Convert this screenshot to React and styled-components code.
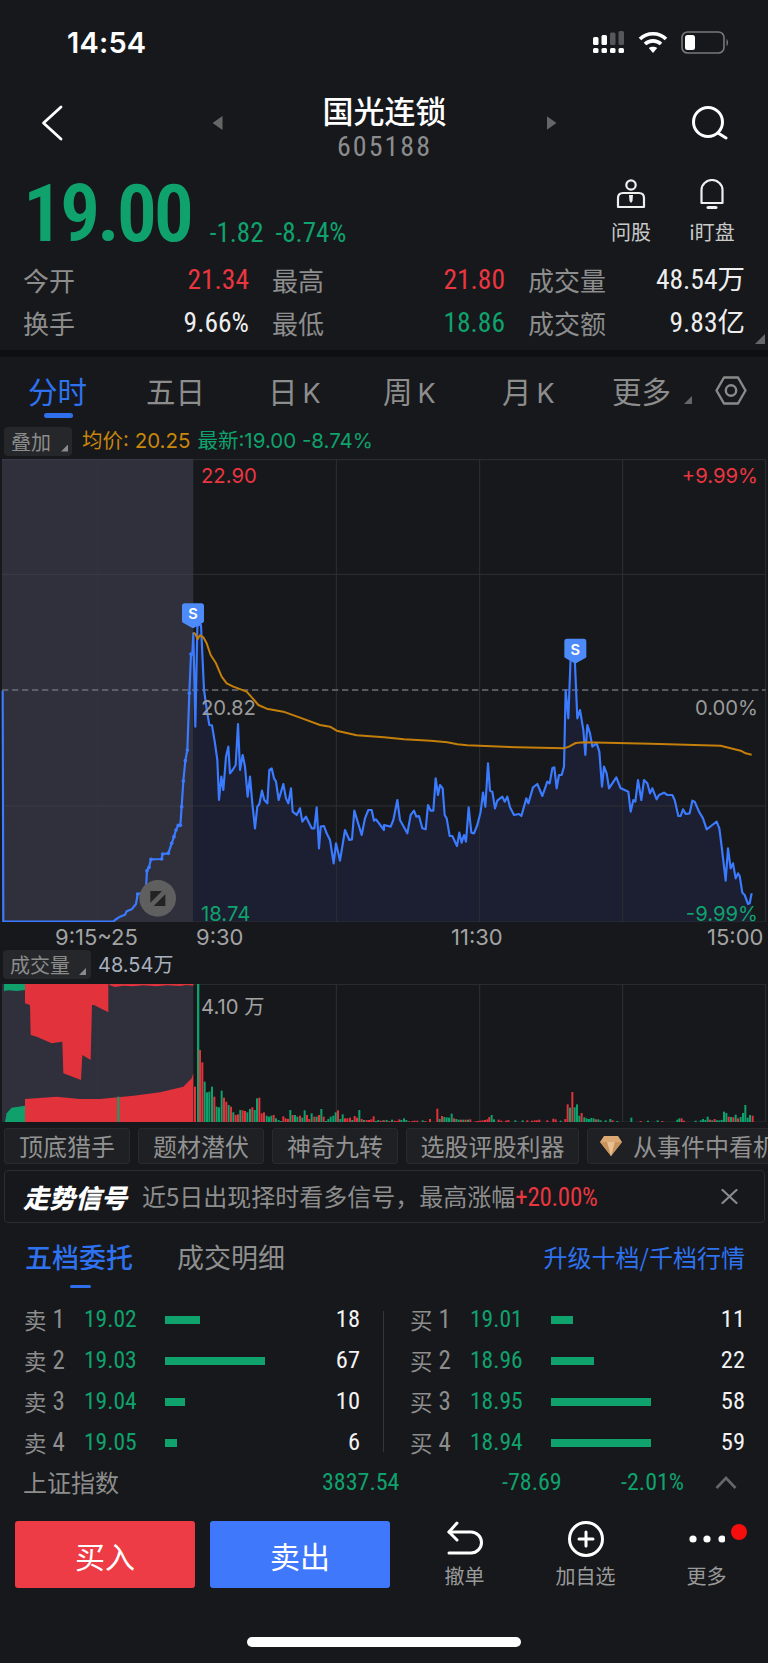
import React from 'react';
import styled, { createGlobalStyle, css } from 'styled-components';

const CJK = '"Noto Sans CJK SC", "Noto Sans", sans-serif';
const LAT = 'Inter, "Noto Sans CJK SC", sans-serif';
const GREEN = '#10a26d';
const RED = '#ea3640';
const GRAY = '#8d8d8d';
const num = (size, line = 1, weight = 400) => css`
  font-family: Roboto, "Noto Sans CJK SC", sans-serif;
  font-size: ${size}px; line-height: ${line === 1 ? 1 : `${line}px`}; font-weight: ${weight}; font-stretch: 75%;
`;

const Global = createGlobalStyle`
  html, body { margin: 0; padding: 0; background: #16181b; }
  body { overflow: hidden; }
  * { box-sizing: border-box; }
`;

const Page = styled.div`
  width: 768px; height: 1663px; background: #16181b; font-family: ${CJK}; color: ${GRAY}; overflow: hidden;
`;
const StatusBar = styled.div`
  height: 84px; display: flex; align-items: center; justify-content: space-between; padding: 0 39px 0 67px;
`;
const Clock = styled.div`font: 600 29px/1 Inter, sans-serif; color: #fff; letter-spacing: .2px;`;
const StatusIcons = styled.div`display: flex; align-items: center; gap: 13px;`;

const Nav = styled.div`
  height: 86px; display: flex; align-items: center; justify-content: space-between; padding: 0 40px 0 41px;
`;
const IconSlot = styled.div`width: 37px; height: 40px; display: flex; align-items: center; margin-top: -8px;`;
const NavCenter = styled.div`
  width: 344px; display: flex; align-items: center; justify-content: space-between; margin-top: -8px;
`;
const Arrow = styled.div`
  width: 10px; height: 14px; background: #666;
  clip-path: ${p => p.$dir === 'left' ? 'polygon(100% 0, 100% 100%, 0 50%)' : 'polygon(0 0, 100% 50%, 0 100%)'};
`;
const TitleBox = styled.div`display: flex; flex-direction: column; align-items: center; margin-top: 4px;`;
const Title = styled.div`font-size: 31px; line-height: 38px; color: #fff; font-weight: 500;`;
const Code = styled.div`${num(28, 26)} color: #8c8c8c; letter-spacing: 2px; margin-top: 5px;`;

const PriceRow = styled.div`
  height: 90px; display: flex; align-items: flex-start; padding: 0 30px 0 23px;
`;
const BigPrice = styled.div`${num(80, 72, 600)} letter-spacing: -3.2px; color: ${GREEN}; margin-top: 8px;`;
const Changes = styled.div`${num(27, 30)} display: flex; gap: 12px; margin: 48px 0 0 19px; color: ${GREEN};`;
const Tools = styled.div`margin-left: auto; display: flex; gap: 29px; padding-top: 9px;`;
const Tool = styled.div`display: flex; flex-direction: column; align-items: center; color: #c9c9c9; font-size: 20px; line-height: 28px; width: 52px; gap: 9px;`;

const Stats = styled.div`
  height: 90px; display: grid; grid-template-columns: 226px 233px 217px; column-gap: 23px; grid-auto-rows: 43px; padding: 0 0 0 23px; position: relative; margin-top: -2px; margin-bottom: 2px;
`;
const Stat = styled.div`display: flex; align-items: center; justify-content: space-between; font-size: 26px;`;
const StatValue = styled.span`${num(27.5)} color: ${p => p.$c || '#eee'};`;
const CornerCaret = styled.div`
  position: absolute; width: ${p => p.$s || 10}px; height: ${p => p.$s || 10}px; right: ${p => p.$r}px; bottom: ${p => p.$b}px;
  background: ${p => p.$c || '#666'}; clip-path: polygon(100% 0, 100% 100%, 0 100%);
`;
const Band = styled.div`height: 7px; background: #0e0f11;`;

const Tabs = styled.div`
  height: 66px; display: grid; grid-template-columns: 118px 122px 115px 119px 110px 103px auto; align-items: start; padding: 17px 0 0 28px; position: relative;
`;
const Tab = styled.div`
  font-size: 29.5px; line-height: 32px; color: ${p => p.$active ? '#2f72f0' : '#8d8d8d'}; position: relative; white-space: nowrap; display: flex; align-items: baseline; gap: ${p => p.$gap || 0}px;
`;
const TabLine = styled.div`position: absolute; left: 16px; top: 39px; width: 29px; height: 5px; border-radius: 3px; background: #2f6fec;`;
const Latin = styled.span`font-family: ${LAT}; font-size: 27px;`;
const HexSlot = styled.div`margin-top: 2px;`;

const OverlayRow = styled.div`height: 36px; display: flex; align-items: center; padding-left: 4px; gap: 10px;`;
const Drop = styled.div`
  position: relative; width: ${p => p.$w}px; height: 29px; background: #25272a; border-radius: 4px; color: #8c8c8c; font-size: 20px; line-height: 29px; padding-left: ${p => p.$pl || 7}px;
`;
const Legend = styled.div`display: flex; gap: 7px; font: 20.5px/1 ${LAT};`;
const LegendItem = styled.span`color: ${p => p.$c};`;

const ChartBox = styled.div`position: relative; height: 463px;`;
const Drawing = styled.svg`display: block;`;
const ChartLabel = styled.div`
  position: absolute; font: 20.3px/1 ${LAT}; color: ${p => p.$c}; top: ${p => p.$t}px;
  ${p => p.$l !== undefined ? `left:${p.$l}px;` : `right:${p.$r}px;`}
`;
const Axis = styled.div`
  height: 28px; display: grid; grid-template-columns: 141px 255px 256px auto; padding: 4px 0 0 55px; font: 22px/22px ${LAT}; color: #a3a3a3; white-space: nowrap;
`;
const VolHead = styled.div`height: 34px; display: flex; padding: 0 0 0 3px; gap: 7px; align-items: flex-start;`;
const VolValue = styled.div`font: 20px/30px ${LAT}; color: #a9b0bd; white-space: nowrap;`;
const VolBox = styled.div`position: relative; height: 138px;`;

const TagRow = styled.div`display: flex; gap: 8px; padding-left: 4px; margin-top: 6px; height: 36px; overflow: hidden;`;
const Tag = styled.div`
  flex: none; width: ${p => p.$w}px; height: 36px; border: 1px solid #282a2e; background: #1e2023; border-radius: 3px; font-size: 24px; line-height: 34px; color: #929292; white-space: nowrap; display: flex; align-items: center; justify-content: ${p => p.$start ? 'flex-start' : 'center'}; gap: 11px; padding-left: ${p => p.$start ? 12 : 0}px;
`;
const Banner = styled.div`
  height: 53px; margin: 6px 3px 0 4px; border: 1px solid #2a2c30; border-radius: 4px; display: flex; align-items: center; padding: 0 26px 0 18px;
`;
const BannerTitle = styled.div`font-size: 26px; font-weight: 900; font-style: italic; color: #fff; line-height: 1; white-space: nowrap;`;
const BannerText = styled.div`font-size: 24px; color: #8d8d8d; margin-left: 15px; white-space: nowrap; flex: 1; line-height: 1;`;
const Rise = styled.span`${num(25)} letter-spacing: -.3px; color: ${RED};`;

const DepthTabs = styled.div`height: 72px; display: flex; align-items: flex-start; padding: 18px 23px 0 25px; position: relative;`;
const DepthTab = styled.div`font-size: 27px; line-height: 32px; color: ${p => p.$active ? '#2f72f0' : '#8f8f8f'}; font-weight: ${p => p.$active ? 500 : 400}; margin-right: 44px; position: relative;`;
const DepthLine = styled.div`position: absolute; left: 45px; top: 44px; width: 21px; height: 3px; border-radius: 2px; background: #2f6fec;`;
const Upgrade = styled.div`margin-left: auto; font-size: 24px; line-height: 32px; color: #2f72f0; white-space: nowrap;`;

const Depth = styled.div`display: flex; align-items: center; margin-top: 4px;`;
const Side = styled.div`flex: 0 0 ${p => p.$w}px; padding: ${p => p.$pad};`;
const Divider = styled.div`width: 1px; height: 141px; background: #33353a;`;
const Row = styled.div`height: 41px; display: grid; grid-template-columns: 60px 81px 1fr auto; align-items: center;`;
const RowLabel = styled.div`font-size: 22.5px; color: #8d8d8d; display: flex; align-items: center; gap: 6px; line-height: 1;`;
const RowDigit = styled.span`${num(25)} color: #8d8d8d;`;
const RowPrice = styled.div`${num(23.5)} color: ${GREEN};`;
const Bar = styled.div`height: 8px; background: ${GREEN};`;
const Qty = styled.div`${num(24.5)} color: #f2f2f2;`;

const IndexRow = styled.div`height: 38px; display: grid; grid-template-columns: 299px 180px 119px 1fr auto; align-items: center; padding: 0 31px 0 23px;`;
const IndexName = styled.div`font-size: 24px; color: #8d8d8d; line-height: 1;`;
const IndexNum = styled.div`${num(24)} color: ${GREEN};`;

const Actions = styled.div`display: flex; margin-top: 20px; padding-left: 15px; height: 68px; position: relative;`;
const TradeButton = styled.div`
  width: 180px; height: 67px; border-radius: 3px; background: ${p => p.$c}; color: #fff; font-size: 30px; display: flex; align-items: center; justify-content: center; margin-right: ${p => p.$mr || 0}px;
`;
const ActionItem = styled.div`
  width: 121px; display: flex; flex-direction: column; align-items: center; font-size: 20px; color: #9a9a9a; position: relative; line-height: 26px; height: 68px; justify-content: space-between; margin-left: ${p => p.$ml || 0}px;
`;
const RedDot = styled.div`position: absolute; right: 20px; top: 3px; width: 16px; height: 16px; border-radius: 50%; background: #f60d0d;`;
const HomeBar = styled.div`width: 274px; height: 10px; background: #fff; border-radius: 5px; margin: 48px auto 0;`;

/* ------- chart data, in the coordinates of a 3x drawing of the page ------- */
const pre = [[8,722],[10,1415],[320,1415],[340,1415],[345,1410],[360,1400],[375,1394],[380,1384],[395,1378],[408,1362],[413,1332],[425,1330],[438,1315],[441,1262],[447,1252],[453,1228],[485,1227],[488,1212],[505,1210],[515,1180],[522,1160],[528,1140],[535,1126],[541,1126],[545,1070],[550,993],[556,932],[562,900],[568,730],[573,612],[577,612]];
const dots = pre.slice(10);
const mainA = [[580,550],[586,830],[592,530],[596,525],[603,525],[612,720],[622,790],[628,825],[636,826],[645,880],[652,930],[657,1050],[664,980],[670,1020],[678,920],[685,890],[690,970],[698,960],[707,945],[714,822],[720,960],[728,915],[735,950],[743,1040],[750,980],[757,1060],[765,1135],[772,1070],[778,1062],[786,1022],[793,1050],[802,1060],[808,960],[815,955],[822,985],[828,995],[836,1050],[850,1002],[858,1045],[865,1060],[873,1015],[878,1085],[890,1095],[900,1075],[907,1115],[918,1100],[935,1135],[943,1135],[950,1072],[957,1195],[962,1130],[972,1128],[980,1150],[990,1170],[1001,1240],[1008,1180],[1020,1232],[1035,1140],[1048,1170],[1056,1168],[1063,1082],[1085,1155],[1095,1105],[1105,1080],[1115,1080],[1122,1112],[1128,1108],[1152,1140]];
const mainB = [[0,1125],[20,1130],[28,1110],[40,1050],[48,1110],[70,1150],[80,1095],[90,1082],[97,1100],[105,1098],[115,1135],[125,1138],[132,1065],[140,1082],[148,1082],[155,985],[162,1035],[168,1005],[176,1015],[182,1095],[188,1105],[197,1158],[205,1158],[219,1188],[226,1148],[233,1178],[240,1155],[246,1175],[254,1072],[262,1148],[270,1150],[280,1125],[290,1085],[297,1028],[304,1070],[312,940],[318,1022],[325,1025],[333,1075],[340,1052],[355,1040],[362,1055],[370,1040],[378,1072],[390,1095],[405,1092],[412,1098],[427,1045],[433,1060],[447,1012],[460,1002],[475,1038],[490,995],[497,1000],[505,955],[511,952],[518,1015],[525,975],[533,975],[540,950],[545,720],[553,805],[560,620],[572,620],[580,805],[588,780],[598,840],[604,915],[610,825],[618,850],[625,890],[638,880],[646,905],[654,1010],[660,950],[668,970],[675,1015],[697,982],[710,1015],[722,1020],[733,1025],[740,1085],[748,1050],[754,1055],[762,990],[772,1050],[780,990],[790,1000],[798,1030],[805,1015],[818,1048],[825,1035],[840,1028],[850,1035],[865,1035],[872,1050],[883,1098],[890,1098],[897,1078],[905,1092],[917,1090],[925,1052],[932,1055],[945,1085],[957,1105],[968,1138],[985,1125],[998,1115],[1006,1135],[1013,1190],[1025,1292],[1032,1195],[1040,1255],[1047,1240],[1055,1285],[1062,1270],[1067,1278],[1075,1328],[1082,1335],[1092,1362],[1097,1360],[1103,1330]].map(([x,y]) => [x+1152,y]);
const avgLine = [[580,548],[586,552],[593,567],[600,556],[610,562],[620,580],[632,615],[648,640],[665,680],[680,700],[700,710],[740,725],[758,745],[775,765],[800,776],[850,785],[900,803],[960,825],[990,830],[1010,842],[1070,856],[1152,862],[1212,868],[1292,872],[1342,877],[1372,883],[1402,886],[1552,892],[1692,895],[1707,890],[1727,879],[1752,877],[1952,881],[2162,887],[2222,902],[2237,910],[2255,914]];
const pts = a => a.map(p => p.join(',')).join(' ');
const main = [...mainA, ...mainB];

const volL = [[585,335,'r'],[600,225,'r'],[607,262,'r'],[614,320,'g'],[621,352,'g'],[628,350,'g'],[636,335,'g'],[643,365,'r'],[650,395,'g'],[657,397,'g'],[665,347,'g'],[672,368,'r'],[679,380,'r'],[686,390,'g'],[693,395,'r'],[700,412,'g'],[707,420,'r'],[714,418,'r'],[721,405,'g'],[728,406,'r'],[735,408,'r'],[742,412,'g'],[750,402,'g'],[757,397,'r'],[764,405,'g'],[771,370,'g'],[778,368,'r'],[785,415,'r'],[792,412,'r'],[800,422,'g'],[807,425,'g'],[814,422,'g'],[821,420,'r'],[828,430,'g'],[836,435,'g'],[843,438,'g'],[850,424,'r'],[857,430,'r'],[864,432,'r'],[871,405,'g'],[878,420,'r'],[885,420,'g'],[892,425,'g'],[900,422,'r'],[907,428,'g'],[914,406,'g'],[921,420,'r'],[928,432,'r'],[935,415,'g'],[943,425,'r'],[950,425,'g'],[957,420,'r'],[964,402,'g'],[971,425,'r'],[978,438,'g'],[985,432,'g'],[992,425,'g'],[1000,422,'g'],[1007,412,'g'],[1014,406,'r'],[1021,432,'g'],[1028,418,'g'],[1035,430,'r'],[1042,430,'r'],[1050,428,'r'],[1057,435,'g'],[1064,423,'r'],[1071,428,'r'],[1078,405,'g'],[1085,432,'r'],[1092,435,'g'],[1100,435,'r'],[1107,435,'r'],[1114,433,'r'],[1121,424,'r'],[1128,438,'g'],[1135,435,'g'],[1142,437,'r'],[1150,436,'g']];
const volR = [[0,436,'r'],[8,435,'g'],[16,438,'r'],[24,434,'g'],[32,437,'r'],[40,438,'r'],[46,433,'r'],[52,435,'g'],[60,430,'g'],[67,435,'g'],[75,439,'r'],[85,438,'r'],[92,437,'r'],[100,437,'r'],[116,436,'g'],[124,438,'r'],[138,432,'r'],[160,401,'r'],[167,432,'g'],[174,423,'r'],[181,426,'g'],[188,427,'g'],[195,428,'g'],[203,416,'g'],[210,430,'r'],[217,432,'g'],[224,434,'g'],[231,434,'r'],[238,434,'g'],[245,434,'r'],[252,434,'g'],[259,433,'r'],[275,439,'r'],[282,438,'r'],[289,437,'r'],[296,436,'r'],[303,435,'r'],[310,433,'r'],[316,426,'r'],[323,420,'g'],[330,433,'g'],[344,434,'r'],[352,437,'r'],[366,437,'r'],[373,435,'r'],[394,436,'g'],[416,436,'g'],[430,436,'r'],[444,437,'r'],[452,436,'r'],[459,436,'r'],[466,434,'r'],[490,436,'r'],[508,431,'r'],[515,433,'r'],[530,437,'g'],[544,432,'r'],[551,388,'r'],[558,398,'g'],[565,351,'r'],[572,397,'g'],[579,388,'g'],[586,422,'g'],[593,414,'r'],[601,427,'g'],[608,430,'g'],[615,432,'g'],[622,429,'g'],[629,430,'g'],[636,433,'r'],[643,433,'g'],[650,436,'g'],[665,436,'g'],[679,432,'g'],[686,436,'r'],[700,438,'g'],[742,428,'g'],[770,438,'r'],[792,437,'g'],[821,436,'g'],[835,438,'r'],[880,434,'g'],[886,430,'g'],[893,430,'r'],[900,437,'r'],[935,437,'g'],[950,436,'g'],[957,432,'g'],[964,435,'g'],[971,425,'g'],[978,434,'r'],[985,436,'g'],[992,432,'r'],[999,436,'g'],[1006,436,'g'],[1013,435,'g'],[1020,410,'g'],[1027,414,'g'],[1034,425,'r'],[1041,426,'g'],[1048,427,'r'],[1055,419,'g'],[1062,430,'r'],[1070,426,'g'],[1077,414,'g'],[1084,390,'g'],[1091,428,'g'],[1098,420,'g'],[1106,422,'r']].map(([x,y,c]) => [x+1152,y,c]);
const volBars = [...volL, ...volR];
const colorOf = { r: '#e2323b', g: '#0fa06c' };

const Badge = ({ x, y }) => (
  <g transform={`translate(${x} ${y})`}>
    <path d="M-33 -30 Q-33 -38 -25 -38 H25 Q33 -38 33 -30 V16 Q33 19 30 20 L2 36 Q0 37 -2 36 L-30 20 Q-33 19 -33 16 Z" fill="#4d8bfb" />
    <text x="0" y="10" textAnchor="middle" fontFamily="Inter, sans-serif" fontWeight="600" fontSize="44" fill="#fff">S</text>
  </g>
);

const VLines = ({ top, bottom }) => (
  <g stroke="#2e3034" strokeWidth="3">
    {[1009, 1439, 1868, 2297].map(x => <line key={x} x1={x} x2={x} y1={top} y2={bottom} />)}
  </g>
);

const PriceChart = () => (
  <Drawing width="768" height="463" viewBox="0 27 2304 1389">
    <rect x="6" y="27" width="574" height="1389" fill="#2f303c" />
    <line x1="292" x2="292" y1="27" y2="1416" stroke="#33343f" strokeWidth="3" />
    <polygon points={`580,1416 ${pts(main)} 2255,1416`} fill="#1c1e31" />
    <g stroke="#2e3034" strokeWidth="3">
      <line x1="580" x2="2297" y1="29" y2="29" />
      <line x1="580" x2="2297" y1="373" y2="373" />
      <line x1="580" x2="2297" y1="1068" y2="1068" />
      <line x1="6" x2="2297" y1="1416" y2="1416" />
    </g>
    <g stroke="#3a3b46" strokeWidth="3">
      <line x1="6" x2="580" y1="29" y2="29" />
      <line x1="6" x2="580" y1="373" y2="373" />
      <line x1="6" x2="580" y1="1068" y2="1068" />
    </g>
    <VLines top={27} bottom={1416} />
    <line x1="6" x2="2297" y1="720" y2="720" stroke="#6c6f78" strokeWidth="4" strokeDasharray="19 11" />
    <polyline points={pts([...pre, ...main])} fill="none" stroke="#3b7bff" strokeWidth="6.5" strokeLinejoin="round" />
    {dots.map(([x, y]) => <circle key={`${x}-${y}`} cx={x} cy={y} r="5.5" fill="#3b7bff" />)}
    <polyline points={pts(avgLine)} fill="none" stroke="#c47f0b" strokeWidth="6" strokeLinejoin="round" />
    <Badge x={579} y={498} />
    <Badge x={1726} y={604} />
    <circle cx="473" cy="1345" r="55" fill="#5f5f5f" />
    <path d="M451 1323 H486 L451 1358 Z M496 1333 V1368 H461 Z" fill="#232325" />
  </Drawing>
);

const VolumeChart = () => (
  <Drawing width="768" height="138" viewBox="0 27 2304 414">
    <rect x="6" y="27" width="574" height="414" fill="#2f303c" />
    <line x1="292" x2="292" y1="27" y2="441" stroke="#33343f" strokeWidth="3" />
    <line x1="6" x2="2297" y1="28" y2="28" stroke="#2e3034" strokeWidth="3" />
    <line x1="6" x2="2297" y1="441" y2="441" stroke="#2e3034" strokeWidth="3" />
    <VLines top={27} bottom={441} />
    <polygon points="12,27 75,27 75,45 50,48 25,46 12,48" fill="#0fa06c" />
    <polygon points="75,27 325,27 325,112 282,90 276,90 272,255 247,240 243,315 190,295 187,200 155,205 110,185 92,180 90,90 75,85" fill="#e2323b" />
    <polygon points="328,27 580,27 580,32 560,30 540,33 500,31 470,34 430,31 400,34 370,32 345,36 328,30" fill="#e2323b" />
    <polygon points="75,372 170,365 240,372 300,372 400,362 480,352 550,335 575,310 580,295 580,441 75,441" fill="#e2323b" />
    <polygon points="15,441 20,415 35,398 75,392 75,441" fill="#0fa06c" />
    <rect x="352" y="365" width="6" height="76" fill="#0fa06c" />
    <rect x="591" y="27" width="7" height="414" fill="#0fa06c" />
    {volBars.map(([x, y, c]) => <rect key={x} x={x - 3} y={y} width="6" height={441 - y} fill={colorOf[c]} />)}
  </Drawing>
);

const Signal = () => (
  <svg width="32" height="22" viewBox="0 0 32 22">
    <g fill="#fff">
      <rect x="0" y="6" width="5.5" height="8" rx="1.5" /><rect x="0" y="17" width="5.5" height="5" rx="1.5" />
      <rect x="8.5" y="4" width="5.5" height="10" rx="1.5" /><rect x="8.5" y="17" width="5.5" height="5" rx="1.5" />
      <rect x="17" y="17" width="5.5" height="5" rx="1.5" /><rect x="25.5" y="17" width="5.5" height="5" rx="1.5" />
    </g>
    <g fill="#55575a">
      <rect x="17" y="1.5" width="5.5" height="12.5" rx="1.5" /><rect x="25.5" y="0" width="5.5" height="14" rx="1.5" />
    </g>
  </svg>
);
const Wifi = () => (
  <svg width="30" height="22" viewBox="0 0 30 22" fill="none" stroke="#fff" strokeWidth="3.6">
    <path d="M2 8 C9 1 21 1 28 8" /><path d="M7 13 C11.5 8.8 18.5 8.8 23 13" />
    <path d="M15 22 L10.8 17 C13 15.2 17 15.2 19.2 17 Z" fill="#fff" stroke="none" />
  </svg>
);
const Battery = () => (
  <svg width="48" height="23" viewBox="0 0 48 23">
    <rect x="1" y="1" width="42" height="21" rx="5.5" fill="none" stroke="#77797c" strokeWidth="1.6" />
    <rect x="4" y="4" width="10" height="15" rx="2.5" fill="#fff" />
    <path d="M45.5 8 C47.5 9 47.5 14 45.5 15 Z" fill="#77797c" />
  </svg>
);

const Chevron = () => (
  <svg width="22" height="36" viewBox="0 0 22 36" fill="none" stroke="#fff" strokeWidth="2.8" strokeLinecap="round" strokeLinejoin="round">
    <path d="M20 2 L2.5 18 L20 34" />
  </svg>
);
const Search = () => (
  <svg width="37" height="34" viewBox="0 0 37 34" fill="none" stroke="#fff" strokeWidth="3" strokeLinecap="round">
    <circle cx="17" cy="16" r="14.5" /><path d="M27 27 L35 32" />
  </svg>
);
const PersonIcon = () => (
  <svg width="30" height="30" viewBox="0 0 30 30" fill="none" stroke="#eee" strokeWidth="2.2">
    <circle cx="15" cy="6" r="4.7" />
    <path d="M2 28 V19 Q2 14 7 14 H23 Q28 14 28 19 V28 Z" strokeLinejoin="round" />
    <path d="M13 16 H17 L16.5 22 L15 24 L13.5 22 Z" fill="#eee" stroke="none" />
  </svg>
);
const BellIcon = () => (
  <svg width="26" height="30" viewBox="0 0 26 30" fill="none" stroke="#eee" strokeWidth="2.2" strokeLinejoin="round">
    <path d="M2.5 24 V11 A10.5 10 0 0 1 23.5 11 V24 Z" />
    <path d="M9 28.5 H17" strokeWidth="3" strokeLinecap="round" />
  </svg>
);
const HexIcon = () => (
  <svg width="32" height="29" viewBox="0 0 32 29" fill="none" stroke="#8a8a8a" strokeWidth="2.4" strokeLinejoin="round">
    <path d="M1.5 14.5 L9 1.5 H23 L30.5 14.5 L23 27.5 H9 Z" /><circle cx="16" cy="14.5" r="5.2" />
  </svg>
);
const CloseIcon = () => (
  <svg width="17" height="15" viewBox="0 0 17 15" stroke="#8a8a8a" strokeWidth="2.2" strokeLinecap="round"><path d="M1.5 1 L15.5 14 M15.5 1 L1.5 14" /></svg>
);
const Diamond = () => (
  <svg width="22" height="20" viewBox="0 0 22 20">
    <path d="M4 0 H18 L22 6 L11 20 L0 6 Z" fill="#dca873" /><path d="M0 6 H22 L11 20 Z" fill="#c8935c" /><path d="M7 6 H15 L11 20 Z" fill="#e8c094" />
  </svg>
);
const UpChevron = () => (
  <svg width="22" height="13" viewBox="0 0 22 13" fill="none" stroke="#666" strokeWidth="2.6"><path d="M1.5 12 L11 2 L20.5 12" /></svg>
);
const UndoIcon = () => (
  <svg width="36" height="34" viewBox="0 0 36 34" fill="none" stroke="#fff" strokeWidth="3" strokeLinecap="round" strokeLinejoin="round">
    <path d="M2 11 H24 A9.5 9.5 0 0 1 24 32 H2" /><path d="M10 2 L2 11 L10 19" />
  </svg>
);
const PlusCircle = () => (
  <svg width="36" height="36" viewBox="0 0 36 36" fill="none" stroke="#fff" strokeWidth="3" strokeLinecap="round">
    <circle cx="18" cy="18" r="16.5" /><path d="M18 11 V25 M11 18 H25" />
  </svg>
);
const MoreDots = () => (
  <svg width="36" height="36" viewBox="0 0 36 36" fill="#fff"><circle cx="4" cy="18" r="3.6" /><circle cx="18" cy="18" r="3.6" /><circle cx="33" cy="18" r="3.6" /></svg>
);

const left = [['1', '19.02', 35, '18'], ['2', '19.03', 100, '67'], ['3', '19.04', 20, '10'], ['4', '19.05', 12, '6']];
const right = [['1', '19.01', 22, '11'], ['2', '18.96', 43, '22'], ['3', '18.95', 100, '58'], ['4', '18.94', 100, '59']];

const DepthRow = ({ label, d }) => (
  <Row>
    <RowLabel>{label}<RowDigit>{d[0]}</RowDigit></RowLabel>
    <RowPrice>{d[1]}</RowPrice>
    <div><Bar style={{ width: d[2] }} /></div>
    <Qty>{d[3]}</Qty>
  </Row>
);

export default function App() {
  return (
    <Page>
      <Global />
      <StatusBar>
        <Clock>14:54</Clock>
        <StatusIcons><Signal /><Wifi /><Battery /></StatusIcons>
      </StatusBar>
      <Nav>
        <IconSlot><Chevron /></IconSlot>
        <NavCenter>
          <Arrow $dir="left" />
          <TitleBox><Title>国光连锁</Title><Code>605188</Code></TitleBox>
          <Arrow />
        </NavCenter>
        <IconSlot><Search /></IconSlot>
      </Nav>
      <PriceRow>
        <BigPrice>19.00</BigPrice>
        <Changes><span>-1.82</span><span>-8.74%</span></Changes>
        <Tools>
          <Tool><PersonIcon />问股</Tool>
          <Tool><BellIcon />i盯盘</Tool>
        </Tools>
      </PriceRow>
      <Stats>
        <Stat>今开<StatValue $c={RED}>21.34</StatValue></Stat>
        <Stat>最高<StatValue $c={RED}>21.80</StatValue></Stat>
        <Stat>成交量<StatValue>48.54万</StatValue></Stat>
        <Stat>换手<StatValue>9.66%</StatValue></Stat>
        <Stat>最低<StatValue $c={GREEN}>18.86</StatValue></Stat>
        <Stat>成交额<StatValue>9.83亿</StatValue></Stat>
        <CornerCaret $r={3} $b={4} />
      </Stats>
      <Band />
      <Tabs>
        <Tab $active>分时<TabLine /></Tab>
        <Tab>五日</Tab>
        <Tab $gap={5}>日<Latin>K</Latin></Tab>
        <Tab $gap={5}>周<Latin>K</Latin></Tab>
        <Tab $gap={5}>月<Latin>K</Latin></Tab>
        <Tab>更多</Tab>
        <HexSlot><HexIcon /></HexSlot>
        <CornerCaret $s={8} $r={76} $b={19} />
      </Tabs>
      <OverlayRow>
        <Drop $w={68}>叠加<CornerCaret $s={7} $r={4} $b={4} $c="#8a8a8a" /></Drop>
        <Legend>
          <LegendItem $c="#c8860b">均价: 20.25</LegendItem>
          <LegendItem $c={GREEN}>最新:19.00 -8.74%</LegendItem>
        </Legend>
      </OverlayRow>
      <ChartBox>
        <PriceChart />
        <ChartLabel $c={RED} $t={7} $l={201}>22.90</ChartLabel>
        <ChartLabel $c={RED} $t={7} $r={10}>+9.99%</ChartLabel>
        <ChartLabel $c="#9a9a9a" $t={239} $l={201}>20.82</ChartLabel>
        <ChartLabel $c="#9a9a9a" $t={239} $r={10}>0.00%</ChartLabel>
        <ChartLabel $c={GREEN} $t={445} $l={201}>18.74</ChartLabel>
        <ChartLabel $c={GREEN} $t={445} $r={10}>-9.99%</ChartLabel>
      </ChartBox>
      <Axis><span>9:15~25</span><span>9:30</span><span>11:30</span><span>15:00</span></Axis>
      <VolHead>
        <Drop $w={88} $pl={7}>成交量<CornerCaret $s={7} $r={5} $b={4} $c="#8a8a8a" /></Drop>
        <VolValue>48.54万</VolValue>
      </VolHead>
      <VolBox>
        <VolumeChart />
        <ChartLabel $c="#a3a3a3" $t={13} $l={201}>4.10 万</ChartLabel>
      </VolBox>
      <TagRow>
        <Tag $w={126}>顶底猎手</Tag>
        <Tag $w={126}>题材潜伏</Tag>
        <Tag $w={126}>神奇九转</Tag>
        <Tag $w={173}>选股评股利器</Tag>
        <Tag $w={260} $start><Diamond />从事件中看机会</Tag>
      </TagRow>
      <Banner>
        <BannerTitle>走势信号</BannerTitle>
        <BannerText>近5日出现择时看多信号，最高涨幅<Rise>+20.00%</Rise></BannerText>
        <CloseIcon />
      </Banner>
      <DepthTabs>
        <DepthTab $active>五档委托<DepthLine /></DepthTab>
        <DepthTab>成交明细</DepthTab>
        <Upgrade>升级十档/千档行情</Upgrade>
      </DepthTabs>
      <Depth>
        <Side $w={383} $pad="0 23px 0 24px">{left.map(d => <DepthRow key={d[0]} label="卖" d={d} />)}</Side>
        <Divider />
        <Side $w={384} $pad="0 23px 0 26px">{right.map(d => <DepthRow key={d[0]} label="买" d={d} />)}</Side>
      </Depth>
      <IndexRow>
        <IndexName>上证指数</IndexName>
        <IndexNum>3837.54</IndexNum>
        <IndexNum>-78.69</IndexNum>
        <IndexNum>-2.01%</IndexNum>
        <UpChevron />
      </IndexRow>
      <Actions>
        <TradeButton $c="#ee3c46" $mr={15}>买入</TradeButton>
        <TradeButton $c="#3f78fb">卖出</TradeButton>
        <ActionItem $ml={14}><UndoIcon />撤单</ActionItem>
        <ActionItem><PlusCircle />加自选</ActionItem>
        <ActionItem><MoreDots /><RedDot />更多</ActionItem>
      </Actions>
      <HomeBar />
    </Page>
  );
}
